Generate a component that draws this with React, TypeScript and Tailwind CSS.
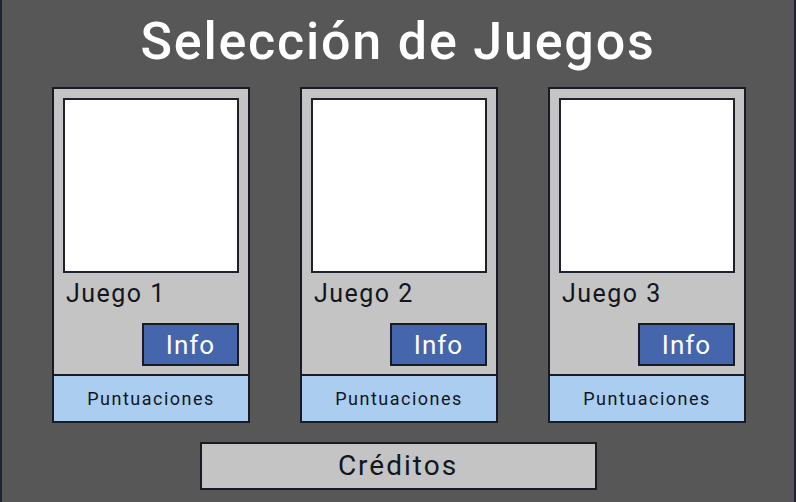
const games = ['Juego 1', 'Juego 2', 'Juego 3'];

function GameCard({ name }: { name: string }) {
  return (
    <div className="flex flex-col w-[198px] h-[336px] bg-[#c4c4c4] border-2 border-[#161b24]">
      <div className="flex flex-col flex-1 px-[9px] pt-[9px] pb-[8px]">
        <div className="w-[176px] h-[175px] bg-white border-2 border-[#1f2229]" />
        <p className="mt-[6px] pl-[3px] text-[25px] leading-[30px] text-[#12161e] tracking-[1.5px]">{name}</p>
        <div className="flex justify-end mt-auto">
          <button className="w-[97px] h-[43px] bg-[#4566ad] border-2 border-[#161b24] text-white text-[26px] leading-none tracking-[1px]">
            Info
          </button>
        </div>
      </div>
      <button className="h-[47px] w-full bg-[#abcdf0] border-t-2 border-[#161b24] text-[18px] text-[#12161e] tracking-[1.5px]">
        Puntuaciones
      </button>
    </div>
  );
}

export default function App() {
  return (
    <div
      className="flex flex-col items-center w-[796px] h-[502px] bg-[#575757] border-x-2 border-[#1c2438]"
      style={{ fontFamily: '"Roboto", "Liberation Sans", sans-serif' }}
    >
      <h1 className="mt-[12px] text-[52px] leading-[60px] font-medium text-white tracking-[1.8px]">
        Selección de Juegos
      </h1>
      <div className="flex gap-[50px] mt-[15px] ml-[2px]">
        {games.map((g) => (
          <GameCard key={g} name={g} />
        ))}
      </div>
      <button className="mt-[19px] w-[397px] h-[48px] bg-[#c4c4c4] border-2 border-[#161b24] text-[28px] text-[#12161e] tracking-[2px]">
        Créditos
      </button>
    </div>
  );
}
